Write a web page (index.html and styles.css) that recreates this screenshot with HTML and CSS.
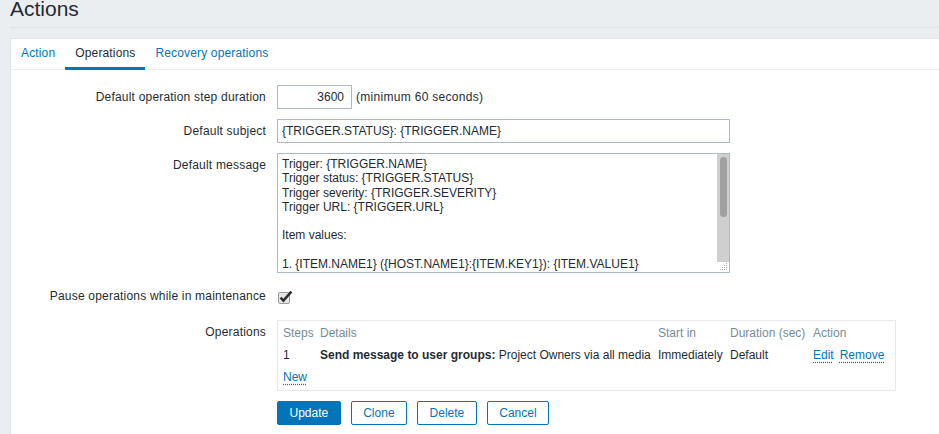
FILE: index.html
```html
<!DOCTYPE html>
<html>
<head>
<meta charset="utf-8">
<title>Actions</title>
<link rel="stylesheet" href="styles.css">
</head>
<body>
<div class="page">
  <header class="page-header"><h1>Actions</h1></header>
  <div class="panel">
    <nav class="tabs">
      <a class="tab">Action</a>
      <a class="tab active">Operations</a>
      <a class="tab">Recovery operations</a>
    </nav>
    <form class="form">
      <label class="lbl">Default operation step duration</label>
      <div class="field"><input class="inp inp-num" value="3600"><span class="hint">(minimum 60 seconds)</span></div>

      <label class="lbl">Default subject</label>
      <div class="field"><input class="inp inp-wide" value="{TRIGGER.STATUS}: {TRIGGER.NAME}"></div>

      <label class="lbl">Default message</label>
      <div class="field">
        <div class="ta-wrap">
          <textarea class="ta">Trigger: {TRIGGER.NAME}
Trigger status: {TRIGGER.STATUS}
Trigger severity: {TRIGGER.SEVERITY}
Trigger URL: {TRIGGER.URL}

Item values:

1. {ITEM.NAME1} ({HOST.NAME1}:{ITEM.KEY1}): {ITEM.VALUE1}
2. {ITEM.NAME2} ({HOST.NAME2}:{ITEM.KEY2}): {ITEM.VALUE2}
3. {ITEM.NAME3} ({HOST.NAME3}:{ITEM.KEY3}): {ITEM.VALUE3}

Original event ID: {EVENT.ID}</textarea>
          <div class="sb"><div class="sb-thumb"></div></div>
          <svg class="grip" width="10" height="10" viewBox="0 0 10 10">
            <g fill="#b4b4b4">
              <rect x="7" y="1" width="1" height="1"/>
              <rect x="5" y="3" width="1" height="1"/><rect x="7" y="3" width="1" height="1"/>
              <rect x="3" y="5" width="1" height="1"/><rect x="5" y="5" width="1" height="1"/><rect x="7" y="5" width="1" height="1"/>
              <rect x="1" y="7" width="1" height="1"/><rect x="3" y="7" width="1" height="1"/><rect x="5" y="7" width="1" height="1"/><rect x="7" y="7" width="1" height="1"/>
            </g>
          </svg>
        </div>
      </div>

      <label class="lbl lbl-check">Pause operations while in maintenance</label>
      <div class="field field-check">
        <svg class="chk" width="16" height="15" viewBox="0 0 16 15">
          <rect x="0.5" y="2.5" width="11" height="11" rx="1.5" fill="#e6e6e6" stroke="#9c9c9c"/>
          <path d="M2.6 7.6 L5.4 10.6 L13.4 1.6" stroke="#2b2b2b" stroke-width="2.4" fill="none" stroke-linejoin="miter"/>
        </svg>
      </div>

      <label class="lbl">Operations</label>
      <div class="ops">
        <div class="ops-row ops-head">
          <span>Steps</span><span>Details</span><span>Start in</span><span>Duration (sec)</span><span>Action</span>
        </div>
        <div class="ops-row">
          <span>1</span>
          <span><b>Send message to user groups:</b> Project Owners via all media</span>
          <span>Immediately</span>
          <span>Default</span>
          <span class="acts"><a class="link">Edit</a><a class="link">Remove</a></span>
        </div>
        <div class="ops-row">
          <span class="full"><a class="link">New</a></span>
        </div>
      </div>

      <div class="buttons">
        <button type="button" class="btn btn-main">Update</button>
        <button type="button" class="btn">Clone</button>
        <button type="button" class="btn">Delete</button>
        <button type="button" class="btn">Cancel</button>
      </div>
    </form>
  </div>
</div>
</body>
</html>
```

FILE: styles.css
```css
html, body {
  margin: 0;
  padding: 0;
  background: #ebeef0;
  overflow: hidden;
}
body {
  font-family: "Liberation Sans", Arial, sans-serif;
  font-size: 12px;
  color: #1f2c33;
}
.page {
  padding-left: 10px;
}
.page-header {
  height: 27px;
  border-bottom: 1px solid #dde3e6;
  margin-bottom: 10px;
}
.page-header h1 {
  margin: 0;
  padding-top: 1px;
  font-size: 21px;
  font-weight: normal;
  line-height: 16px;
  color: #1f2c33;
}
.panel {
  background: #fff;
  border: 1px solid #dfe4e7;
  border-right: 0;
  min-height: 420px;
}
.tabs {
  display: flex;
  height: 30px;
  border-bottom: 1px solid #ebeef0;
}
.tab {
  display: block;
  padding: 0 10px;
  line-height: 29px;
  height: 28px;
  color: #0275b8;
  letter-spacing: 0.15px;
  cursor: pointer;
}
.tab.active {
  color: #1f2c33;
  border-bottom: 3px solid #0275b8;
}
.form {
  display: grid;
  grid-template-columns: 245px 1fr;
  column-gap: 11px;
  row-gap: 10px;
  padding: 15px 0 0 10px;
  margin: 0;
}
.lbl {
  text-align: right;
  line-height: 24px;
  white-space: nowrap;
  letter-spacing: 0.2px;
}
.lbl-check {
  line-height: 27px;
}
.field {
  display: flex;
  align-items: center;
  min-height: 24px;
}
.field-check {
  height: 27px;
}
.chk {
  display: block;
  margin-left: 1px;
  margin-top: 1px;
}
.inp {
  box-sizing: border-box;
  height: 24px;
  border: 1px solid #acbbc2;
  padding: 0 4px;
  margin: 0;
  font-family: "Liberation Sans", Arial, sans-serif;
  font-size: 12px;
  color: #1f2c33;
  background: #fff;
  outline: none;
}
.inp-num {
  width: 75px;
  text-align: right;
  padding-right: 7px;
}
.hint {
  margin-left: 4px;
  letter-spacing: 0.3px;
}
.inp-wide {
  width: 453px;
}
.ta-wrap {
  position: relative;
  width: 453px;
  height: 120px;
}
.ta {
  box-sizing: border-box;
  width: 453px;
  height: 120px;
  border: 1px solid #acbbc2;
  padding: 3px 16px 2px 4px;
  margin: 0;
  font-family: "Liberation Sans", Arial, sans-serif;
  font-size: 12px;
  line-height: 14.3px;
  color: #1f2c33;
  resize: none;
  overflow: hidden;
  white-space: pre;
  outline: none;
  display: block;
}
.sb {
  position: absolute;
  top: 1px;
  right: 1px;
  width: 12px;
  height: 108px;
  background: #cfcfcf;
}
.sb-thumb {
  margin: 3px 2px 0 3px;
  height: 60px;
  border-radius: 4px;
  background: #a0a0a0;
}
.grip {
  position: absolute;
  right: 1px;
  bottom: 1px;
  display: block;
}
.ops {
  box-sizing: border-box;
  width: 619px;
  border: 1px solid #e6eaed;
  padding: 1px 0 2px 5px;
}
.ops-row {
  display: grid;
  grid-template-columns: 37px 338px 72px 83px 1fr;
  height: 22px;
  line-height: 22px;
  white-space: nowrap;
}
.ops-head {
  color: #768d99;
}
.full {
  grid-column: 1 / -1;
}
.acts {
  display: flex;
  gap: 6px;
}
.link {
  color: #0275b8;
  text-decoration: underline dotted;
  text-underline-offset: 3px;
  cursor: pointer;
}
.buttons {
  grid-column: 2;
  display: flex;
  gap: 10px;
}
.btn {
  box-sizing: border-box;
  height: 24px;
  padding: 0 11.5px;
  border: 1px solid #0275b8;
  border-radius: 2px;
  background: #fff;
  color: #0275b8;
  font-family: "Liberation Sans", Arial, sans-serif;
  font-size: 12px;
  margin: 0;
  cursor: pointer;
}
.btn-main {
  background: #0275b8;
  color: #fff;
}
```
